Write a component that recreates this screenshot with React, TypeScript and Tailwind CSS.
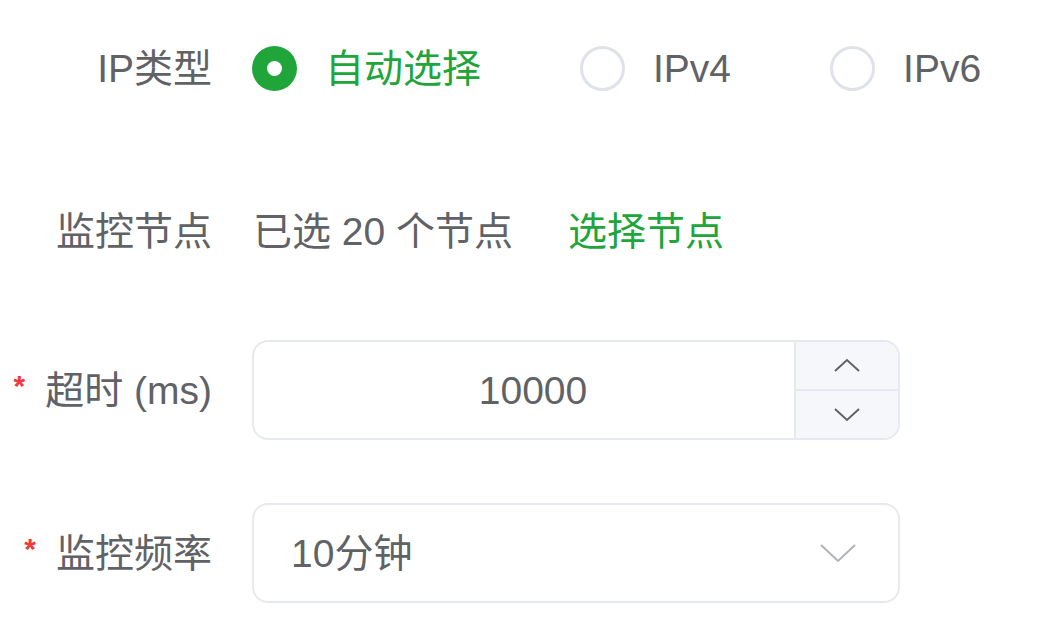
import React, { useState } from 'react';

const font = { fontFamily: '"Liberation Sans", "Noto Sans CJK SC", sans-serif' };

function Label({ children, required }: { children: React.ReactNode; required?: boolean }) {
  return (
    <div className="w-[212px] shrink-0 flex items-center justify-end text-[39px] leading-none text-[#606266]">
      {required && (
        <span className="text-[#f0393b] text-[30px] font-bold mr-[20px] leading-none -mt-[8px]">*</span>
      )}
      <span>{children}</span>
    </div>
  );
}

function Radio({ checked, label, onClick }: { checked: boolean; label: string; onClick: () => void }) {
  return (
    <button type="button" onClick={onClick} className="flex items-center mr-[99px] last:mr-0">
      {checked ? (
        <span className="w-[45px] h-[45px] rounded-full bg-[#20a53a] flex items-center justify-center">
          <span className="w-[15px] h-[15px] rounded-full bg-white" />
        </span>
      ) : (
        <span className="w-[45px] h-[45px] rounded-full border-[3px] border-[#dfe2e8] bg-white" />
      )}
      <span className={`ml-[28px] text-[39px] leading-none ${checked ? 'text-[#20a53a]' : 'text-[#606266]'}`}>{label}</span>
    </button>
  );
}

export default function App() {
  const [ipType, setIpType] = useState('auto');
  const [timeout, setTimeoutVal] = useState(10000);

  return (
    <div className="w-[1041px] h-[625px] bg-white pt-[18px]" style={font}>
      <div className="flex flex-col">
        {/* IP类型 */}
        <div className="flex h-[100px] items-center">
          <Label>IP类型</Label>
          <div className="ml-[40px] flex items-center">
            <Radio checked={ipType === 'auto'} label="自动选择" onClick={() => setIpType('auto')} />
            <Radio checked={ipType === 'v4'} label="IPv4" onClick={() => setIpType('v4')} />
            <Radio checked={ipType === 'v6'} label="IPv6" onClick={() => setIpType('v6')} />
          </div>
        </div>

        {/* 监控节点 */}
        <div className="mt-[63px] flex h-[100px] items-center">
          <Label>监控节点</Label>
          <div className="ml-[41px] flex items-center text-[39px] leading-none">
            <span className="text-[#606266]">已选 20 个节点</span>
            <button type="button" className="ml-[55px] text-[#20a53a]">选择节点</button>
          </div>
        </div>

        {/* 超时 */}
        <div className="mt-[59px] flex h-[100px] items-center">
          <Label required>超时 (ms)</Label>
          <div className="ml-[40px] w-[648px] h-[100px] flex border-2 border-[#e6e9ef] rounded-[16px] overflow-hidden">
            <div className="flex-1 flex items-center justify-center pl-[18px] text-[39px] leading-none text-[#606266]">
              {timeout}
            </div>
            <div className="w-[104px] flex flex-col border-l-2 border-[#e6e9ef] bg-[#f5f7fa]">
              <button
                type="button"
                onClick={() => setTimeoutVal(timeout + 1)}
                className="flex-1 flex items-center justify-center border-b-2 border-[#e6e9ef]"
              >
                <svg width="28" height="15" viewBox="0 0 28 15" fill="none">
                  <polyline points="2,13 14,2 26,13" stroke="#606266" strokeWidth="2" />
                </svg>
              </button>
              <button
                type="button"
                onClick={() => setTimeoutVal(timeout - 1)}
                className="flex-1 flex items-center justify-center"
              >
                <svg width="28" height="15" viewBox="0 0 28 15" fill="none">
                  <polyline points="2,2 14,13 26,2" stroke="#606266" strokeWidth="2" />
                </svg>
              </button>
            </div>
          </div>
        </div>

        {/* 监控频率 */}
        <div className="mt-[63px] flex h-[100px] items-center">
          <Label required>监控频率</Label>
          <div className="ml-[40px] w-[648px] h-[100px] flex items-center justify-between border-2 border-[#e6e9ef] rounded-[16px] pl-[37px] pr-[42px] text-[39px] leading-none text-[#606266]">
            <span>10分钟</span>
            <svg width="36" height="19" viewBox="0 0 36 19" fill="none">
              <polyline points="1,1 18,17 35,1" stroke="#b0b3b8" strokeWidth="2" />
            </svg>
          </div>
        </div>
      </div>
    </div>
  );
}
